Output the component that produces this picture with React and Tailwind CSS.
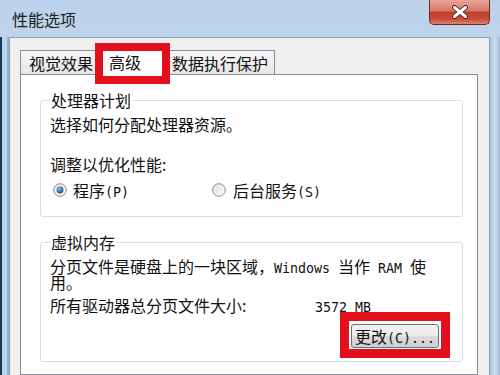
import React from "react";

function Mono({ children }) {
  return <span className="font-['DejaVu_Sans_Mono',monospace] text-[13.3px] leading-[0]">{children}</span>;
}

function Radio({ checked }) {
  return (
    <svg width="14" height="14" viewBox="0 0 14 14" className="shrink-0">
      <defs>
        <linearGradient id="rg" x1="0" y1="0" x2="1" y2="1">
          <stop offset="0" stopColor="#d8d8d8" />
          <stop offset="1" stopColor="#fbfbfb" />
        </linearGradient>
        <radialGradient id="dot" cx="0.4" cy="0.35" r="0.7">
          <stop offset="0" stopColor="#9cc6ea" />
          <stop offset="0.6" stopColor="#3a6f9e" />
          <stop offset="1" stopColor="#1d4a75" />
        </radialGradient>
      </defs>
      <circle cx="7" cy="7" r="6.3" fill="url(#rg)" stroke="#8c8f93" strokeWidth="1" />
      <circle cx="7" cy="7" r="4.6" fill="none" stroke="#ffffff" strokeWidth="1" opacity="0.8" />
      {checked && <circle cx="7" cy="7" r="3.4" fill="url(#dot)" />}
    </svg>
  );
}

export default function App() {
  return (
    <div className="w-[500px] h-[375px] overflow-hidden flex flex-col bg-[linear-gradient(#bcd2ea,#d9e7f5)] font-['Noto_Sans_CJK_SC',sans-serif] text-[#111]">
      {/* title bar */}
      <div className="h-[37px] flex items-start shrink-0">
        <div className="pl-[12px] pt-[10px] text-[16px] leading-[18px] text-[#1b1b1b]">性能选项</div>
        <div className="ml-auto mr-[10px] w-[61px] h-[25px] rounded-b-[5px] border border-t-0 border-[#6e2a21] bg-[linear-gradient(#e9a698_0%,#d6786a_45%,#c23d2b_52%,#c84e3b_80%,#de8370_100%)] flex items-center justify-center">
          <svg width="18" height="14" viewBox="0 0 18 14">
            <path d="M3.5 2.5 L14.5 11.5 M14.5 2.5 L3.5 11.5" stroke="#4a1a14" strokeWidth="4.8" strokeLinecap="round" />
            <path d="M3.5 2.5 L14.5 11.5 M14.5 2.5 L3.5 11.5" stroke="#ffffff" strokeWidth="3" strokeLinecap="round" />
          </svg>
        </div>
      </div>

      {/* body */}
      <div className="flex flex-1 min-h-0">
        <div className="w-[9px] shrink-0 bg-[linear-gradient(to_right,#1c3553_0,#1c3553_2px,#b8d6f3_2px,#b8d6f3_7px,#9db3c8_7px)]" />
        <div className="flex-1 flex flex-col bg-[#f0f0f0] border-t border-l border-r border-[#8a9db2] pt-[12px] pl-[10px] pr-[11px]">
          {/* tabs */}
          <div className="flex items-end h-[24px] shrink-0 text-[16px] leading-[18px]">
            <div className="w-[76px] h-[24px] flex items-center pl-[8px] border border-b-0 border-[#898c95] bg-[linear-gradient(#f7f7f7,#e6e6e6)]">视觉效果</div>
            <div className="relative z-10 w-[70px] h-[28px] -mb-[1px] flex items-center pl-[12px] border border-b-0 border-[#898c95] bg-white">
              高级
              <div className="absolute -left-[2px] -top-[5px] w-[75px] h-[41px] border-[8px] border-[#e3101b]" />
            </div>
            <div className="w-[109px] h-[24px] flex items-center pl-[6px] border border-b-0 border-l-0 border-[#898c95] bg-[linear-gradient(#f7f7f7,#e6e6e6)]">数据执行保护</div>
          </div>

          {/* panel */}
          <div className="flex-1 bg-white border border-[#898c95] pt-[16px] pl-[19px] pr-[14px] text-[16px] leading-[18px]">
            <fieldset className="border border-[#d5dfe5] rounded-[3px] pl-[9px] pr-[9px] pb-[17px]">
              <legend className="px-[1px] leading-[18px]">处理器计划</legend>
              <div className="mt-[6px] h-[18px]">选择如何分配处理器资源。</div>
              <div className="mt-[22px] h-[18px]">调整以优化性能:</div>
              <div className="mt-[8px] h-[18px] flex items-center">
                <div className="w-[162px] flex items-center gap-[6px] pl-[3px]">
                  <Radio checked />
                  <span className="h-[18px]">程序<Mono>(P)</Mono></span>
                </div>
                <div className="flex items-center gap-[7px]">
                  <Radio />
                  <span className="h-[18px]">后台服务<Mono>(S)</Mono></span>
                </div>
              </div>
            </fieldset>

            <fieldset className="mt-[16px] border border-[#d5dfe5] rounded-[3px] pl-[9px] pr-[9px] pb-[13px]">
              <legend className="px-[1px] leading-[18px]">虚拟内存</legend>
              <div className="mt-[7px] h-[16px] leading-[16px] whitespace-nowrap">
                分页文件是硬盘上的一块区域，<Mono>Windows </Mono>当作<Mono> RAM </Mono>使
              </div>
              <div className="h-[16px] leading-[16px]">用。</div>
              <div className="mt-[7px] h-[16px] flex leading-[16px]">
                <div className="w-[265px]">所有驱动器总分页文件大小:</div>
                <div className="h-[16px]"><Mono>3572 MB</Mono></div>
              </div>
              <div className="mt-[11px] flex justify-end pr-[14px]">
                <div className="relative">
                  <div className="w-[88px] h-[24px] rounded-[3px] border border-[#707070] bg-[linear-gradient(#f2f2f2_0%,#ebebeb_50%,#dddddd_50%,#cfcfcf_100%)] flex items-center justify-center leading-[16px]">
                    <span className="h-[16px]">更改<Mono>(C)...</Mono></span>
                  </div>
                  <div className="absolute -left-[11px] -top-[12px] -right-[11px] -bottom-[10px] border-[9px] border-[#e3101b]" />
                </div>
              </div>
            </fieldset>
          </div>
        </div>
        <div className="w-[10px] shrink-0 bg-[linear-gradient(to_right,#a9c3dc,#cadef1_50%,#a3bcd4)]" />
      </div>
    </div>
  );
}
